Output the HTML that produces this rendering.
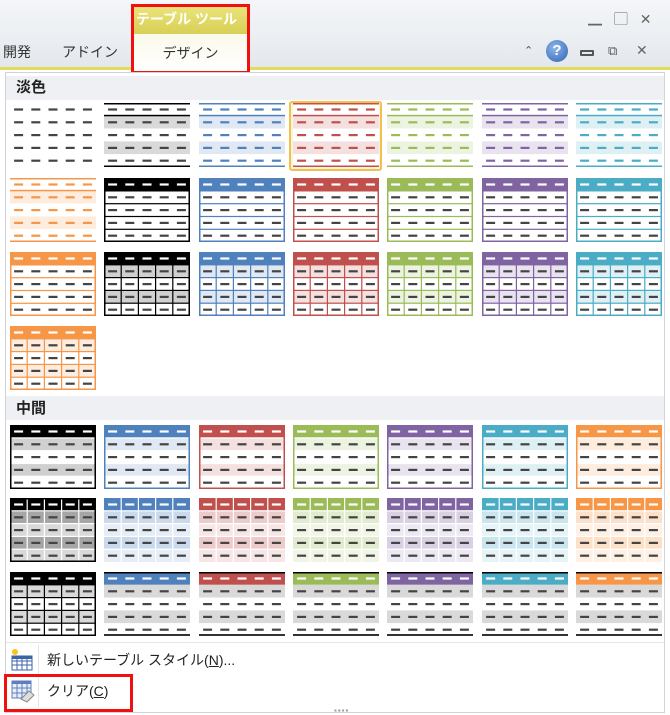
<!DOCTYPE html>
<html><head><meta charset="utf-8">
<style>
*{margin:0;padding:0;box-sizing:border-box}
body{width:670px;height:713px;overflow:hidden;position:relative;background:#fff;font-family:"Liberation Sans","Noto Sans CJK JP",sans-serif}
.ab{position:absolute}
.ribbon{left:0;top:0;width:670px;height:70px;background:linear-gradient(#f4f6f9,#e3e7ec)}
.hdr{background:#eef0f4;font-weight:bold;font-size:15px;color:#222;padding-left:10px}
</style></head><body>
<div class="ab ribbon"></div>
<div class="ab" style="left:0;top:67px;width:670px;height:3px;background:#e3dc58"></div>
<div class="ab" style="left:3px;top:42px;font-size:14px;color:#333">開発</div>
<div class="ab" style="left:62px;top:42px;font-size:14px;color:#333">アドイン</div>
<div class="ab" style="left:131px;top:4px;width:119px;height:70px;border:3px solid #f01010;background:linear-gradient(#f8f8f0 0,#fff 100%)"></div>
<div class="ab" style="left:134px;top:7px;width:113px;height:27px;background:linear-gradient(#ebe37a,#d7cf55);color:#fff;font-size:14px;font-weight:bold;padding:2px 0 0 2px">テーブル ツール</div>
<div class="ab" style="left:134px;top:34px;width:113px;height:37px;background:linear-gradient(#faf9ea,#fff);font-size:14px;color:#333;text-align:center;padding-top:9px">デザイン</div>
<div class="ab" style="left:588px;top:9px;font-size:14px;color:#666;letter-spacing:4px">▁ ▢ ✕</div>
<div class="ab" style="left:524px;top:44px;font-size:11px;color:#555">⌃</div>
<div class="ab" style="left:546px;top:40px;width:22px;height:22px;border-radius:50%;background:radial-gradient(circle at 40% 35%,#8fb6e8,#2b62b5);color:#fff;font-weight:bold;font-size:15px;text-align:center;line-height:22px">?</div>
<div class="ab" style="left:580px;top:50px;width:14px;height:6px;border:2px solid #555;border-radius:1px"></div>
<div class="ab" style="left:608px;top:43px;font-size:13px;color:#555">⧉</div>
<div class="ab" style="left:636px;top:42px;font-size:14px;color:#666">✕</div>
<div class="ab" style="left:5px;top:72px;width:660px;height:641px;background:#fff;border:1px solid #d0d4da"></div>
<div class="ab hdr" style="left:6px;top:76px;width:658px;height:24px;line-height:24px">淡色</div>
<div class="ab hdr" style="left:6px;top:396px;width:658px;height:24px;line-height:26px">中間</div>
<div class="ab" style="left:289px;top:101px;width:93px;height:70px;border:2px solid #f0c050;border-radius:3px;background:#fdf4d6"></div>
<div id="g"></div>
<div class="ab" style="left:6px;top:642px;width:658px;height:1px;background:#e3e5e8"></div>
<div class="ab" style="left:38px;top:645px;width:1px;height:62px;background:#e3e5e8"></div>
<svg class="ab" style="left:10px;top:648px" width="24" height="24"><rect x="2" y="8" width="20" height="14" fill="#fff" stroke="#3d63a8"/><rect x="2" y="8" width="20" height="3" fill="#3d63a8"/><path d="M2 13H22M2 17H22M7 8V22M12 8V22M17 8V22" stroke="#3d63a8"/><circle cx="5" cy="4" r="3" fill="#f5c518"/></svg>
<div class="ab" style="left:47px;top:650px;font-size:14px;color:#222">新しいテーブル スタイル(<u>N</u>)...</div>
<div class="ab" style="left:4px;top:674px;width:129px;height:38px;border:3px solid #f01010"></div>
<svg class="ab" style="left:11px;top:679px" width="24" height="24"><rect x="1" y="2" width="19" height="17" fill="#e8eef8" stroke="#5b7fbf"/><rect x="1" y="2" width="19" height="3" fill="#5b7fbf"/><path d="M1 9H20M1 14H20M6 2V19M11 2V19M16 2V19" stroke="#5b7fbf"/><path d="M10 20L18 12L23 16L16 23Z" fill="#ddd" stroke="#888"/></svg>
<div class="ab" style="left:47px;top:681px;font-size:14px;color:#222">クリア(<u>C</u>)</div>
<div class="ab" style="left:334px;top:706px;font-size:8px;color:#999;letter-spacing:1px">▪▪▪▪</div>
<script>
var C=[[0,0,0],[79,129,189],[192,80,77],[155,187,89],[128,100,162],[75,172,198],[247,150,70]];
function mix(c,a){return 'rgb('+c.map(function(v){return Math.round(255-(255-v)*a)}).join(',')+')'}
var W=86,H=64,rh=H/5;
function dashes(y,col){var s='';for(var i=0;i<5;i++){var x=W/5*i+W/10-4.5;s+='<rect x="'+x+'" y="'+(y+rh/2-1)+'" width="9" height="2.2" fill="'+col+'"/>';}return s;}
function thumb(t,ci){var c=C[ci],col=mix(c,1),s='';var dk='#444';
 var t1=mix(c,0.18),t2=mix(c,0.3);
 for(var r=0;r<5;r++){var y=r*rh,fill='#fff',dc=dk;
  if(t=='A'){if(r%2==1)fill=ci==0?'#d9d9d9':t1;dc=ci==0?dk:col;}
  else if(t=='N'){dc=dk;}
  else if(t=='B'||t=='C'){if(r==0){fill=col;dc='#fff'}}
  else if(t=='D'){if(r==0){fill=col;dc='#fff'}else if(r%2==1)fill=ci==0?'#d0d0d0':t1;}
  else if(t=='E'){if(r==0){fill=col;dc='#fff'}else fill=r%2==1?(ci==0?'#a6a6a6':t2):(ci==0?'#d9d9d9':mix(c,0.14));}
  else if(t=='F'){if(r==0){fill=col;dc='#fff'}else if(r%2==1)fill='#d9d9d9';}
  if(t=='C'&&r%2==1)fill=ci==0?'#d0d0d0':t1;
  s+='<rect x="0" y="'+y+'" width="'+W+'" height="'+rh+'" fill="'+fill+'"/>'+dashes(y,dc);}
 if(t=='A'){s+='<rect x="0" y="0" width="'+W+'" height="1.5" fill="'+col+'"/><rect x="0" y="'+(rh-1)+'" width="'+W+'" height="1.5" fill="'+col+'"/><rect x="0" y="'+(H-1.5)+'" width="'+W+'" height="1.5" fill="'+col+'"/>';}
 if(t=='B'||t=='D'){for(var r=1;r<5;r++)s+='<rect x="1" y="'+(r*rh-0.5)+'" width="'+(W-2)+'" height="1.2" fill="'+(t=='B'?col:'#fff')+'"/>';s+='<rect x="0.75" y="0.75" width="'+(W-1.5)+'" height="'+(H-1.5)+'" fill="none" stroke="'+col+'" stroke-width="1.5"/>';}
 if(t=='C'||t=='E'||(t=='F'&&ci==0)){var gc=(t=='C'||ci==0&&t=='F')?col:'#fff';for(var i=1;i<5;i++){s+='<rect x="'+(W/5*i-0.6)+'" y="0" width="1.2" height="'+H+'" fill="'+gc+'"/><rect x="0" y="'+(i*rh-0.6)+'" width="'+W+'" height="1.2" fill="'+gc+'"/>';}
  if(t!='E'||ci==0)s+='<rect x="0.75" y="0.75" width="'+(W-1.5)+'" height="'+(H-1.5)+'" fill="none" stroke="'+col+'" stroke-width="1.5"/>';}
 if(t=='F'&&ci!=0){s+='<rect x="0" y="0" width="'+W+'" height="1.5" fill="#000"/><rect x="0" y="'+(H-2)+'" width="'+W+'" height="2" fill="#333"/>';}
 return '<svg width="'+W+'" height="'+H+'">'+s+'</svg>';}
var out='';
function put(col,top,t,ci){out+='<div class="ab" style="left:'+Math.round(10+col*94.3)+'px;top:'+top+'px;width:86px;height:64px">'+thumb(t,ci)+'</div>';}
put(0,103,'N',0);for(var i=0;i<6;i++)put(i+1,103,'A',i);
put(0,178,'A',6);for(var i=0;i<6;i++)put(i+1,178,'B',i);
put(0,252,'B',6);for(var i=0;i<6;i++)put(i+1,252,'C',i);
put(0,326,'C',6);
for(var i=0;i<7;i++)put(i,425,'D',i);
for(var i=0;i<7;i++)put(i,498,'E',i);
for(var i=0;i<7;i++)put(i,572,'F',i);
document.getElementById('g').innerHTML=out;
</script>
</body></html>
